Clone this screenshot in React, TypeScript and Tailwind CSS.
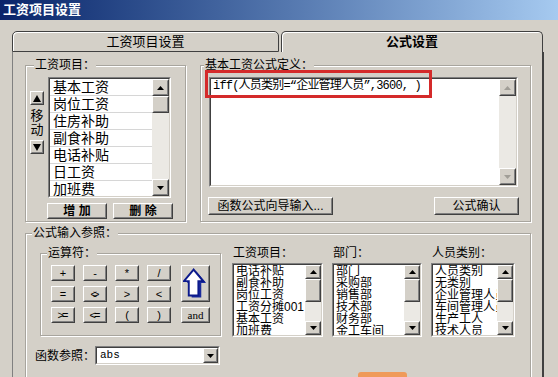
import React from "react";

const leftItems = ["基本工资", "岗位工资", "住房补助", "副食补助", "电话补贴", "日工资", "加班费"];
const wageItems = ["电话补贴", "副食补助", "岗位工资", "工资分摊001", "基本工资", "加班费"];
const deptItems = ["部门", "采购部", "销售部", "技术部", "财务部", "金工车间"];
const typeItems = ["人员类别", "无类别", "企业管理人员", "车间管理人员", "生产工人", "技术人员"];
const ops = ["+", "-", "*", "/", "=", "<>", ">", "<", ">=", "<=", "(", ")"];

function Btn({ className = "", children }: { className?: string; children?: React.ReactNode }) {
  return (
    <div className={`shrink-0 border border-t-white border-l-white border-r-[#404040] border-b-[#404040] bg-[#d4d0c8] ${className}`}>
      <div className="h-full border border-t-[#d4d0c8] border-l-[#d4d0c8] border-r-[#808080] border-b-[#808080] flex items-center justify-center">
        {children}
      </div>
    </div>
  );
}

function Sunken({ className = "", children }: { className?: string; children?: React.ReactNode }) {
  return (
    <div className={`shrink-0 border border-t-[#808080] border-l-[#808080] border-r-white border-b-white ${className}`}>
      <div className="h-full border border-t-[#404040] border-l-[#404040] border-r-[#d4d0c8] border-b-[#d4d0c8] bg-white flex overflow-hidden">
        {children}
      </div>
    </div>
  );
}

function Arrow({ dir, disabled }: { dir: "up" | "down"; disabled?: boolean }) {
  const c = disabled ? "#a19e97" : "#000";
  return (
    <svg width="7" height="4" viewBox="0 0 7 4">
      {dir === "up" ? <polygon points="3.5,0 7,4 0,4" fill={c} /> : <polygon points="0,0 7,0 3.5,4" fill={c} />}
    </svg>
  );
}

function ScrollBar({ w, btn, thumb, disabled }: { w: string; btn: string; thumb?: string; disabled?: boolean }) {
  return (
    <div className={`${w} shrink-0 h-full flex flex-col bg-[#ebe9e4]`}>
      <Btn className={btn}><Arrow dir="up" disabled={disabled} /></Btn>
      {thumb && <Btn className={thumb} />}
      <div className="flex-1" />
      <Btn className={btn}><Arrow dir="down" disabled={disabled} /></Btn>
    </div>
  );
}

function Group({ label, className = "", legendClass = "ml-[8px]", children }: { label: string; className?: string; legendClass?: string; children?: React.ReactNode }) {
  return (
    <fieldset className={`min-w-0 shrink-0 border border-[#a8a59e] shadow-[1px_1px_0_#fff,inset_1px_1px_0_#fff] ${className}`}>
      <legend className={`px-[1px] text-[12px] leading-[14px] bg-[#d4d0c8] ${legendClass}`}>{label}</legend>
      {children}
    </fieldset>
  );
}

function SmallList({ label, items, w }: { label: string; items: string[]; w: string }) {
  return (
    <div className="flex flex-col">
      <div className="pl-[1px] text-[12px] leading-[14px]">{label}</div>
      <Sunken className={`mt-[3px] h-[74px] ${w}`}>
        <div className="flex-1 min-w-0 overflow-hidden pl-[2px]">
          {items.map((t) => (
            <div key={t} className="text-[12px] leading-[12px] whitespace-nowrap">{t}</div>
          ))}
        </div>
        <ScrollBar w="w-[16px]" btn="h-[14px]" thumb="h-[23px]" />
      </Sunken>
    </div>
  );
}

function UpArrow() {
  const front = "11,1 1,13 6,13 6,28 16,28 16,13 21,13";
  return (
    <svg width="26" height="31" viewBox="0 0 26 31">
      <polygon points={front} transform="translate(3,2)" fill="#1c2c9c" />
      <polygon points={front} fill="#fff" stroke="#0c1a8c" strokeWidth="2" strokeLinejoin="miter" />
    </svg>
  );
}

export default function App() {
  return (
    <div className="relative w-[558px] h-[377px] overflow-hidden bg-[#d4d0c8] text-black font-['Liberation_Sans','Noto_Sans_CJK_SC',sans-serif]">
      {/* Title bar */}
      <div className="h-[20px] bg-gradient-to-r from-[#0a246a] to-[#a6caf0] pl-[3px] text-[13px] leading-[20px] font-bold text-white">
        工资项目设置
      </div>

      {/* Tabs */}
      <div className="mt-[11px] ml-[12px] flex h-[21px]">
        <div className="w-[267px] h-[21px] rounded-t-[5px] border border-[#404040] shadow-[inset_1px_1px_0_#fff] flex items-center justify-center text-[13px]">
          工资项目设置
        </div>
        <div className="ml-[2px] w-[262px] h-[21px] rounded-t-[5px] border-t border-l border-r border-[#404040] shadow-[inset_1px_1px_0_#fff] flex items-center justify-center text-[13px] font-bold">
          公式设置
        </div>
      </div>

      {/* Panel */}
      <div className="ml-[12px] w-[532px] h-[330px] border-l border-l-[#808080] border-r-2 border-r-[#404040] pl-[12px] pt-[6px] flex flex-col">
        <div className="flex gap-[14px]">
          {/* Wage items */}
          <Group label="工资项目：" className="w-[161px] h-[164px]">
            <div className="flex pt-[5px] pl-[4px]">
              <div className="w-[14px] flex flex-col items-center pt-[14px]">
                <Btn className="w-[14px] h-[14px]">
                  <svg width="8" height="7" viewBox="0 0 8 7"><polygon points="4,0 8,7 0,7" fill="#000" /></svg>
                </Btn>
                <div className="mt-[4px] text-[13px] leading-[14px]">移</div>
                <div className="text-[13px] leading-[14px]">动</div>
                <Btn className="mt-[3px] w-[14px] h-[14px]">
                  <svg width="8" height="7" viewBox="0 0 8 7"><polygon points="0,0 8,0 4,7" fill="#000" /></svg>
                </Btn>
              </div>
              <Sunken className="ml-[4px] w-[123px] h-[121px]">
                <div className="flex-1 min-w-0 overflow-hidden">
                  {leftItems.map((t) => (
                    <div key={t} className="h-[17px] border-b border-[#d6d6d6] pl-[3px] text-[14px] leading-[16px] whitespace-nowrap">{t}</div>
                  ))}
                </div>
                <ScrollBar w="w-[17px]" btn="h-[17px]" thumb="h-[17px]" />
              </Sunken>
            </div>
            <div className="mt-[5px] pl-[21px] flex gap-[6px]">
              <Btn className="w-[60px] h-[16px]"><span className="text-[12px] leading-[12px] font-bold">增 加</span></Btn>
              <Btn className="w-[60px] h-[16px]"><span className="text-[12px] leading-[12px] font-bold">删 除</span></Btn>
            </div>
          </Group>

          {/* Formula definition */}
          <Group label="基本工资公式定义：" className="w-[331px] h-[164px]" legendClass="ml-[3px]">
            <div className="pt-[5px] pl-[8px]">
              <Sunken className="w-[309px] h-[110px]">
                <div className="flex-1 min-w-0 pl-[2px] text-[12px] leading-[14px] tracking-[-0.8px] whitespace-nowrap font-['Liberation_Mono','Noto_Sans_CJK_SC',monospace]">
                  iff(人员类别=“企业管理人员”,3600, )
                </div>
                <ScrollBar w="w-[17px]" btn="h-[17px]" disabled />
              </Sunken>
              <div className="mt-[10px] ml-[-1px] w-[311px] flex justify-between">
                <Btn className="w-[125px] h-[18px]"><span className="text-[12px] leading-[12px]">函数公式向导输入...</span></Btn>
                <Btn className="w-[85px] h-[18px]"><span className="text-[12px] leading-[12px]">公式确认</span></Btn>
              </div>
            </div>
          </Group>
        </div>

        {/* Formula input reference */}
        <Group label="公式输入参照：" className="mt-[4px] w-[506px] h-[170px]" legendClass="ml-[6px]">
          <div className="flex pt-[6px] pl-[14px]">
            <div className="w-[181px] flex flex-col">
              <Group label="运算符：" className="w-[181px] h-[90px]" legendClass="ml-[6px]">
                <div className="flex pt-[5px] pl-[10px]">
                  <div className="grid grid-cols-4 gap-x-[8px] gap-y-[5px]">
                    {ops.map((o) => (
                      <Btn key={o} className="w-[24px] h-[16px]">
                        <span className={`text-[11px] leading-[11px] ${o === "<>" ? "tracking-[-4px] pr-[4px]" : o.length > 1 ? "tracking-[-2px] pr-[2px]" : ""}`}>{o}</span>
                      </Btn>
                    ))}
                  </div>
                  <div className="ml-[10px] flex flex-col">
                    <Btn className="w-[29px] h-[37px]"><UpArrow /></Btn>
                    <Btn className="mt-[5px] w-[29px] h-[16px]">
                      <span className="text-[11px] leading-[11px] font-['Liberation_Serif',serif]">and</span>
                    </Btn>
                  </div>
                </div>
              </Group>
              <div className="mt-[10px] ml-[-5px] flex items-center h-[19px]">
                <div className="w-[60px] text-[12px] leading-[14px]">函数参照：</div>
                <Sunken className="w-[125px] h-[19px]">
                  <div className="flex-1 pl-[3px] text-[11px] leading-[15px] font-['Liberation_Mono',monospace]">abs</div>
                  <Btn className="w-[15px] h-full"><Arrow dir="down" /></Btn>
                </Sunken>
              </div>
            </div>

            <div className="ml-[11px] flex gap-[9px]">
              <SmallList label="工资项目：" items={wageItems} w="w-[91px]" />
              <SmallList label="部门：" items={deptItems} w="w-[90px]" />
              <SmallList label="人员类别：" items={typeItems} w="w-[84px]" />
            </div>
          </div>
        </Group>
      </div>

      {/* red annotation around the formula */}
      <div className="absolute left-[205px] top-[70px] w-[227px] h-[28px] border-[3px] border-[#d42a2a]" />
      {/* orange patch at bottom edge */}
      <div className="absolute left-[358px] top-[372px] w-[49px] h-[8px] rounded-t-[3px] bg-[#ef9a5a]" />
    </div>
  );
}
